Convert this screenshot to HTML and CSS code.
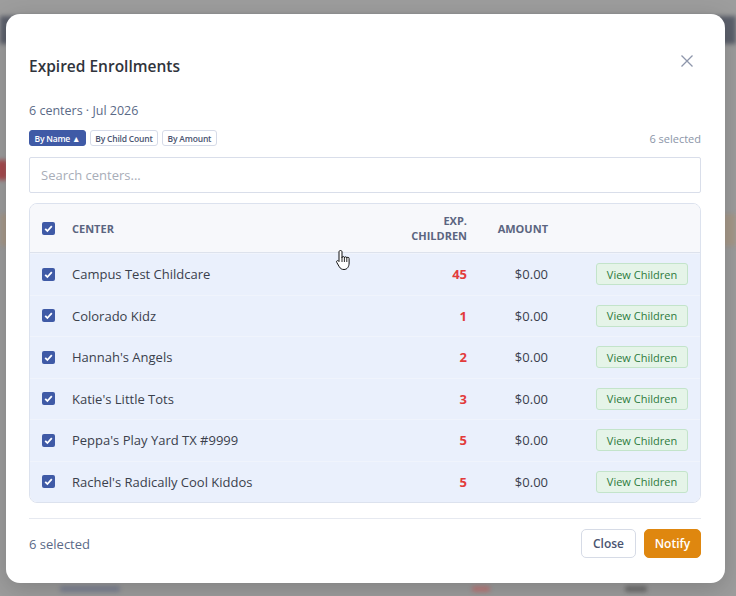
FILE: index.html
```html
<!DOCTYPE html>
<html lang="en">
<head>
    <meta charset="UTF-8">
    <meta name="viewport" content="width=device-width, initial-scale=1.0">
    <title>Expired Enrollments</title>
    <link rel="stylesheet" href="styles.css">
</head>
<body>
    <!-- blurred page behind the dialog -->
    <div class="backdrop">
        <div class="bg-bar"></div>
        <div class="bg-red"></div>
        <div class="bg-band"></div>
        <div class="bg-foot">
            <span class="bg-chip"></span>
            <span class="bg-red-text"></span>
            <span class="bg-amt"></span>
        </div>
    </div>

    <div class="modal">
        <div class="modal-head">
            <h2>Expired Enrollments</h2>
            <svg class="close-x" width="14" height="14" viewBox="0 0 14 14">
                <path d="M1.5 1.5 L12.5 12.5 M12.5 1.5 L1.5 12.5" stroke="#8d96ab" stroke-width="1.3" fill="none"/>
            </svg>
        </div>
        <p class="subtitle">6 centers · Jul 2026</p>

        <div class="sort-row">
            <div class="sort-buttons">
                <button class="sort active">By Name ▲</button>
                <button class="sort">By Child Count</button>
                <button class="sort">By Amount</button>
            </div>
            <span class="count">6 selected</span>
        </div>

        <input class="search" type="text" placeholder="Search centers...">

        <div class="table">
            <div class="row head">
                <span class="cell"><span class="check"><svg width="13" height="13" viewBox="0 0 13 13"><path d="M3.2 6.8 L5.4 9 L9.8 4.2" stroke="#fff" stroke-width="1.8" fill="none"/></svg></span></span>
                <span class="cell">CENTER</span>
                <span class="cell num">EXP.<br>CHILDREN</span>
                <span class="cell num">AMOUNT</span>
                <span class="cell"></span>
            </div>
            <div class="row">
                <span class="cell"><span class="check"><svg width="13" height="13" viewBox="0 0 13 13"><path d="M3.2 6.8 L5.4 9 L9.8 4.2" stroke="#fff" stroke-width="1.8" fill="none"/></svg></span></span>
                <span class="cell name">Campus Test Childcare</span>
                <span class="cell num red">45</span>
                <span class="cell num">$0.00</span>
                <span class="cell act"><button class="view">View Children</button></span>
            </div>
            <div class="row">
                <span class="cell"><span class="check"><svg width="13" height="13" viewBox="0 0 13 13"><path d="M3.2 6.8 L5.4 9 L9.8 4.2" stroke="#fff" stroke-width="1.8" fill="none"/></svg></span></span>
                <span class="cell name">Colorado Kidz</span>
                <span class="cell num red">1</span>
                <span class="cell num">$0.00</span>
                <span class="cell act"><button class="view">View Children</button></span>
            </div>
            <div class="row">
                <span class="cell"><span class="check"><svg width="13" height="13" viewBox="0 0 13 13"><path d="M3.2 6.8 L5.4 9 L9.8 4.2" stroke="#fff" stroke-width="1.8" fill="none"/></svg></span></span>
                <span class="cell name">Hannah's Angels</span>
                <span class="cell num red">2</span>
                <span class="cell num">$0.00</span>
                <span class="cell act"><button class="view">View Children</button></span>
            </div>
            <div class="row">
                <span class="cell"><span class="check"><svg width="13" height="13" viewBox="0 0 13 13"><path d="M3.2 6.8 L5.4 9 L9.8 4.2" stroke="#fff" stroke-width="1.8" fill="none"/></svg></span></span>
                <span class="cell name">Katie's Little Tots</span>
                <span class="cell num red">3</span>
                <span class="cell num">$0.00</span>
                <span class="cell act"><button class="view">View Children</button></span>
            </div>
            <div class="row">
                <span class="cell"><span class="check"><svg width="13" height="13" viewBox="0 0 13 13"><path d="M3.2 6.8 L5.4 9 L9.8 4.2" stroke="#fff" stroke-width="1.8" fill="none"/></svg></span></span>
                <span class="cell name">Peppa's Play Yard TX #9999</span>
                <span class="cell num red">5</span>
                <span class="cell num">$0.00</span>
                <span class="cell act"><button class="view">View Children</button></span>
            </div>
            <div class="row">
                <span class="cell"><span class="check"><svg width="13" height="13" viewBox="0 0 13 13"><path d="M3.2 6.8 L5.4 9 L9.8 4.2" stroke="#fff" stroke-width="1.8" fill="none"/></svg></span></span>
                <span class="cell name">Rachel's Radically Cool Kiddos</span>
                <span class="cell num red">5</span>
                <span class="cell num">$0.00</span>
                <span class="cell act"><button class="view">View Children</button></span>
            </div>
        </div>

        <div class="modal-foot">
            <span class="foot-count">6 selected</span>
            <div class="foot-buttons">
                <button class="btn-close">Close</button>
                <button class="btn-notify">Notify</button>
            </div>
        </div>

        <!-- mouse pointer -->
        <svg class="pointer" width="18" height="22" viewBox="0 0 18 22">
            <path d="M5.5 1.5 C6.6 1.5 7 2.2 7 3 V9 C7 8 7.4 7.5 8.2 7.5 C9 7.5 9.4 8 9.4 9 C9.4 8.2 9.8 7.8 10.6 7.8 C11.4 7.8 11.8 8.3 11.8 9.2 C11.8 8.6 12.2 8.3 12.9 8.3 C13.7 8.3 14.1 8.8 14.1 9.6 V14 C14.1 17.5 12.3 20.5 9 20.5 C6.6 20.5 5.4 19.5 4.3 17.8 L1.8 13.5 C1.3 12.7 1.5 12 2.2 11.7 C2.9 11.4 3.5 11.8 4 12.5 V3 C4 2.2 4.4 1.5 5.5 1.5 Z" fill="#fff" stroke="#111" stroke-width="1"/>
            <path d="M9.4 9 V13 M11.8 9.2 V13 M7 9 V13" stroke="#111" stroke-width="0.9"/>
        </svg>
    </div>
</body>
</html>
```

FILE: styles.css
```css
/* Basic reset */
* {
    margin: 0;
    padding: 0;
    box-sizing: border-box;
}

html, body {
    height: 100%;
}

body {
    font-family: 'Open Sans', 'Noto Sans', sans-serif;
    color: #333a45;
    background-color: #9d9d9d;
    overflow: hidden;
    position: relative;
}

/* Page behind the overlay */
.backdrop {
    position: absolute;
    inset: 0;
    filter: blur(2px);
}

.bg-bar {
    position: absolute;
    left: 0;
    right: 0;
    top: 16px;
    height: 28px;
    background-color: #5c606b;
}

.bg-red {
    position: absolute;
    left: -4px;
    top: 160px;
    width: 12px;
    height: 20px;
    border-radius: 4px;
    background-color: #a64a4e;
}

.bg-band {
    position: absolute;
    left: 0;
    right: 0;
    top: 214px;
    height: 32px;
    background-color: #a6998a;
}

.bg-foot span {
    position: absolute;
    top: 586px;
    height: 6px;
    border-radius: 2px;
}

.bg-chip {
    left: 60px;
    width: 60px;
    background-color: #7d8293;
}

.bg-red-text {
    left: 472px;
    width: 18px;
    background-color: #b97a7a;
}

.bg-amt {
    left: 625px;
    width: 22px;
    background-color: #6e6e6e;
}

/* Dialog */
.modal {
    position: absolute;
    left: 6px;
    top: 14px;
    width: 719px;
    height: 569px;
    background-color: #fff;
    border-radius: 14px;
    padding: 0 24px 0 23px;
    box-shadow: 0 6px 24px rgba(0, 0, 0, 0.18);
}

.modal-head {
    display: flex;
    justify-content: space-between;
    align-items: center;
    padding-top: 40px;
    padding-right: 7px;
    box-sizing: content-box;
    height: 26px;
}

.modal-head h2 {
    font-size: 15.5px;
    font-weight: 600;
    color: #30343c;
    margin-top: -2px;
}

.close-x {
    margin-top: -12px;
}

.subtitle {
    margin-top: 22px;
    font-size: 12.5px;
    color: #5b6a87;
}

.sort-row {
    display: flex;
    justify-content: space-between;
    align-items: center;
    margin-top: 11px;
}

.sort-buttons {
    display: flex;
    gap: 4px;
}

.sort {
    font-family: 'Open Sans', sans-serif;
    font-size: 8.5px;
    font-weight: 600;
    letter-spacing: -0.2px;
    height: 16px;
    padding: 0 4.5px;
    border: 1px solid #d6dbe8;
    border-radius: 3px;
    background-color: #fff;
    color: #4a5470;
}

.sort.active {
    background-color: #3f5aa6;
    border-color: #3f5aa6;
    color: #fff;
}

.count {
    font-size: 11px;
    color: #8b95a8;
}

.search {
    display: block;
    width: 100%;
    height: 36px;
    margin-top: 11px;
    padding: 0 11px;
    border: 1px solid #d9deea;
    border-radius: 2px;
    font-family: 'Open Sans', sans-serif;
    font-size: 13px;
    outline: none;
}

.search::placeholder {
    color: #a8adb8;
}

/* Table */
.table {
    margin-top: 10px;
    border: 1px solid #dce2ee;
    border-radius: 8px;
    overflow: hidden;
}

.row {
    display: grid;
    grid-template-columns: 42px 295px 100px 81px 152px;
    align-items: center;
    height: 41.5px;
    background-color: #eaf0fc;
    border-top: 1px solid #f0f4fc;
    font-size: 13px;
    color: #3a404c;
}

.row.head {
    height: 49px;
    background-color: #f7f8fb;
    border-top: none;
    border-bottom: 1px solid #dde2ec;
    font-size: 11px;
    font-weight: 700;
    color: #5b6580;
    line-height: 15px;
}

.row .cell:first-child {
    padding-left: 12px;
    display: flex;
}

.check {
    display: inline-block;
    width: 13px;
    height: 13px;
    border-radius: 2px;
    background-color: #3f5aa6;
}

.check svg {
    display: block;
}

.num {
    text-align: right;
}

.red {
    color: #e23b3b;
    font-weight: 700;
}

.act {
    display: flex;
    justify-content: flex-end;
    padding-right: 12px;
}

.view {
    font-family: 'Open Sans', sans-serif;
    font-size: 11px;
    font-weight: 500;
    height: 22px;
    width: 92px;
    border: 1px solid #c3e4ca;
    border-radius: 3px;
    background-color: #e5f4e8;
    color: #2d7a3c;
}

/* Footer */
.modal-foot {
    display: flex;
    justify-content: space-between;
    align-items: center;
    margin-top: 15px;
    padding-top: 10px;
    border-top: 1px solid #e6e9f0;
}

.foot-count {
    font-size: 13px;
    color: #5b6a87;
}

.foot-buttons {
    display: flex;
    gap: 8px;
}

.foot-buttons button {
    font-family: 'Open Sans', sans-serif;
    font-size: 12px;
    font-weight: 600;
    height: 29px;
    border-radius: 5px;
}

.btn-close {
    width: 55px;
    background-color: #fff;
    border: 1px solid #d6dbe6;
    color: #4a5470;
}

.btn-notify {
    width: 57px;
    background-color: #df870f;
    border: 1px solid #df870f;
    color: #fff;
}

.pointer {
    position: absolute;
    left: 329px;
    top: 235px;
}
```
